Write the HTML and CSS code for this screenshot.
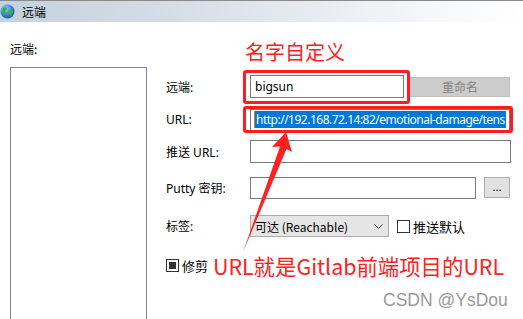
FILE: index.html
```html
<!DOCTYPE html>
<html>
<head>
<meta charset="utf-8">
<link rel="stylesheet" href="styles.css">
</head>
<body>
<div class="page">
  <div class="titlebar">
    <svg class="globe" width="15" height="15" viewBox="0 0 15 15">
      <defs>
        <radialGradient id="g" cx="0.35" cy="0.3" r="0.8">
          <stop offset="0" stop-color="#8fd0ff"/>
          <stop offset="0.6" stop-color="#2f7fd6"/>
          <stop offset="1" stop-color="#1a4f9a"/>
        </radialGradient>
      </defs>
      <circle cx="7.5" cy="7.5" r="7" fill="url(#g)"/>
      <path d="M3 4 L6 3 L7 5 L5 7 L6 9 L4 11 L2 8 Z" fill="#3fae3a"/>
      <path d="M9 6 L12 5 L13 8 L11 12 L9 10 Z" fill="#3fae3a"/>
    </svg>
    <span class="title">远端</span>
  </div>
  <div class="content">
    <div class="leftcol">
      <div class="lbl">远端:</div>
      <div class="listbox"></div>
    </div>
    <div class="form">
      <div class="row r1">
        <span class="flabel">远端:</span>
        <div class="tb tb1">bigsun</div>
        <div class="btn rename">重命名</div>
      </div>
      <div class="row r2">
        <span class="flabel">URL:</span>
        <div class="tb tb2"><span class="sel">http://192.168.72.14:82/emotional-damage/tens</span></div>
      </div>
      <div class="row r3">
        <span class="flabel">推送 URL:</span>
        <div class="tb tb3"></div>
      </div>
      <div class="row r4">
        <span class="flabel">Putty 密钥:</span>
        <div class="tb tb4"></div>
        <div class="btn dots">...</div>
      </div>
      <div class="row r5">
        <span class="flabel">标签:</span>
        <div class="combo">可达 (Reachable)
          <svg class="chev" width="9" height="6" viewBox="0 0 9 6"><path d="M0.5 0.5 L4.5 4.5 L8.5 0.5" fill="none" stroke="#444" stroke-width="1"/></svg>
        </div>
        <span class="cb"></span>
        <span class="cblabel">推送默认</span>
      </div>
      <div class="row r6">
        <span class="cb checked"><span class="fill"></span></span>
        <span class="cblabel">修剪</span>
      </div>
    </div>
  </div>

  <div class="redbox box1"></div>
  <div class="redbox box2"></div>
  <div class="note note1">名字自定义</div>
  <div class="note note2">URL就是Gitlab前端项目的URL</div>
  <svg class="arrow" width="523" height="319" viewBox="0 0 523 319">
    <path d="M286 132 L272 147 L280 146.5 L243 252 L286.5 149 L292 152 Z" fill="#ff2020"/>
  </svg>
  <div class="watermark">CSDN @YsDou</div>
</div>
</body>
</html>
```

FILE: styles.css
```css
html, body {
  margin: 0;
  padding: 0;
  background: #ffffff;
}
.page {
  position: relative;
  width: 523px;
  height: 319px;
  overflow: hidden;
  font-family: "Noto Sans", "Noto Sans CJK SC", sans-serif;
  font-size: 12px;
  color: #000;
}
.titlebar {
  height: 21px;
  border-top: 1px solid #8a8a8a;
  background: linear-gradient(to right, #c4d1de 0%, #d6dee7 35%, #eef1f5 70%, #ffffff 100%);
  display: flex;
  align-items: center;
}
.globe {
  margin-left: 0;
  margin-right: 7px;
}
.title {
  font-family: "Noto Sans CJK SC", sans-serif;
  font-size: 12px;
  line-height: 14px;
}
.content {
  display: flex;
}
.leftcol {
  width: 137px;
  padding-left: 10px;
  padding-top: 19px;
}
.lbl {
  font-family: "Noto Sans CJK SC", sans-serif;
  line-height: 14px;
  height: 14px;
  margin-top: 1px;
}
.listbox {
  margin-top: 11px;
  width: 135px;
  height: 280px;
  border: 1px solid #828790;
}
.form {
  margin-left: 19px;
  padding-top: 53px;
  flex: 1;
}
.row {
  display: flex;
  align-items: center;
  height: 23px;
  position: relative;
}
.flabel {
  width: 84px;
  font-family: "Noto Sans", "Noto Sans CJK SC", sans-serif;
}
.tb {
  box-sizing: border-box;
  height: 23px;
  border: 1px solid #7a7a7a;
  background: #fff;
  display: flex;
  align-items: center;
  padding-left: 4px;
  overflow: hidden;
}
.tb1 { width: 154px; }
.tb2 { width: 260px; height: 22px; padding-left: 3px; }
.tb3 { width: 261px; }
.tb4 { width: 226px; height: 22px; }
.r2 { margin-top: 10px; }
.r3 { margin-top: 9px; }
.r4 { margin-top: 13px; }
.r5 { margin-top: 16px; height: 22px; }
.r6 { margin-top: 20px; height: 16px; }
.sel {
  background: #0078d7;
  color: #fff;
  line-height: 17px;
  padding: 0 1px;
  border-left: 1px solid #e07a1f;
  white-space: nowrap;
  letter-spacing: -0.5px;
}
.btn {
  box-sizing: border-box;
  display: flex;
  align-items: center;
  justify-content: center;
}
.rename {
  margin-left: 6px;
  width: 100px;
  height: 20px;
  background: #cccccc;
  border: 1px solid #bfbfbf;
  color: #838383;
  font-family: "Noto Sans CJK SC", sans-serif;
}
.dots {
  margin-left: 8px;
  width: 26px;
  height: 21px;
  background: #e1e1e1;
  border: 1px solid #adadad;
  font-size: 11px;
  padding-bottom: 3px;
}
.combo {
  box-sizing: border-box;
  width: 139px;
  height: 22px;
  background: #e5e5e5;
  border: 1px solid #adadad;
  display: flex;
  align-items: center;
  padding-left: 4px;
  position: relative;
  font-family: "Noto Sans CJK SC", sans-serif;
}
.chev {
  position: absolute;
  right: 5px;
  top: 8px;
}
.cb {
  box-sizing: border-box;
  width: 13px;
  height: 13px;
  border: 1px solid #333;
  background: #fff;
  margin-left: 8px;
  display: flex;
  align-items: center;
  justify-content: center;
}
.r6 .cb { margin-left: 0; }
.cb .fill {
  width: 7px;
  height: 7px;
  background: #333;
}
.cblabel {
  margin-left: 3px;
  font-family: "Noto Sans CJK SC", sans-serif;
  font-size: 13px;
}
.redbox {
  position: absolute;
  box-sizing: border-box;
  border: 3px solid #ff1c1c;
  border-radius: 3px;
}
.box1 { left: 243px; top: 70px; width: 167px; height: 34px; }
.box2 { left: 243px; top: 106px; width: 270px; height: 27px; }
.note {
  position: absolute;
  color: #ff2020;
  font-family: "Noto Sans CJK SC", sans-serif;
  white-space: nowrap;
}
.note1 { left: 245px; top: 40px; font-size: 20px; line-height: 24px; }
.note2 { left: 213px; top: 253px; font-size: 21.4px; line-height: 26px; }
.arrow {
  position: absolute;
  left: 0;
  top: 0;
}
.watermark {
  position: absolute;
  left: 383px;
  top: 290px;
  font-family: "Liberation Sans", sans-serif;
  font-size: 17.5px;
  color: #9a9a9a;
  text-shadow: 0 0 1px #fff;
}
```
